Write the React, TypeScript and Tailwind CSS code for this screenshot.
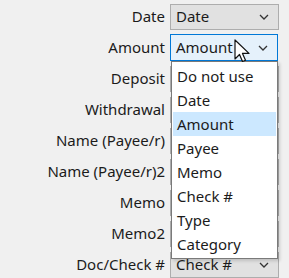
import React from 'react';

const rows = [
    { label: 'Date', value: 'Date' },
    { label: 'Amount', value: 'Amount', active: true },
    { label: 'Deposit', value: '' },
    { label: 'Withdrawal', value: '' },
    { label: 'Name (Payee/r)', value: '' },
    { label: 'Name (Payee/r)2', value: '' },
    { label: 'Memo', value: '' },
    { label: 'Memo2', value: '' },
    { label: 'Doc/Check #', value: 'Check #' },
];

const options = ['Do not use', 'Date', 'Amount', 'Payee', 'Memo', 'Check #', 'Type', 'Category'];

function Chevron() {
    return (
        <svg width="10" height="6" viewBox="0 0 10 6" className="shrink-0">
            <path d="M1 1l4 4 4-4" fill="none" stroke="#333" strokeWidth="1.3" />
        </svg>
    );
}

function Select({ value, active }: { value: string; active?: boolean }) {
    return (
        <div
            className={
                active
                    ? 'flex h-[27px] w-[108px] items-center justify-between border border-[#0078d7] bg-[#e5f1fb] pl-[5px] pr-[9px]'
                    : 'flex h-[26px] w-[109px] items-center justify-between border border-[#adadad] bg-[#e1e1e1] pl-[5px] pr-[9px]'
            }
        >
            <span>{value}</span>
            <Chevron />
        </div>
    );
}

function Cursor() {
    return (
        <svg width="16" height="24" viewBox="0 0 16 24" className="absolute left-[234px] top-[39px]">
            <path
                d="M1 1v19l4.5-4.5 3 7 3-1.3-3-6.8H15z"
                fill="#fff"
                stroke="#111"
                strokeWidth="1.2"
                strokeLinejoin="round"
            />
        </svg>
    );
}

export default function App() {
    return (
        <div
            className="relative h-[278px] w-[289px] overflow-hidden bg-[#f0f0f0] text-[15px] text-[#1b1b1b]"
            style={{ fontFamily: '"Noto Sans", "Open Sans", sans-serif' }}
        >
            <div className="flex flex-col pt-[1px]">
                {rows.map(row => (
                    <div key={row.label} className="flex h-[31px] items-center">
                        <div className="w-[170px] pr-[5px] text-right leading-none">{row.label}</div>
                        <Select value={row.value} active={row.active} />
                    </div>
                ))}
            </div>

            {/* Open dropdown list */}
            <div className="absolute left-[171px] top-[61px] w-[107px] border border-[#7a7a7a] bg-white py-[2px] shadow-[2px_2px_3px_rgba(0,0,0,0.15)]">
                {options.map(opt => (
                    <div
                        key={opt}
                        className={
                            opt === 'Amount'
                                ? 'mx-[1px] flex h-[24px] items-center bg-[#cce8ff] px-[4px]'
                                : 'mx-[1px] flex h-[24px] items-center px-[4px]'
                        }
                    >
                        {opt}
                    </div>
                ))}
            </div>

            <Cursor />
        </div>
    );
}
